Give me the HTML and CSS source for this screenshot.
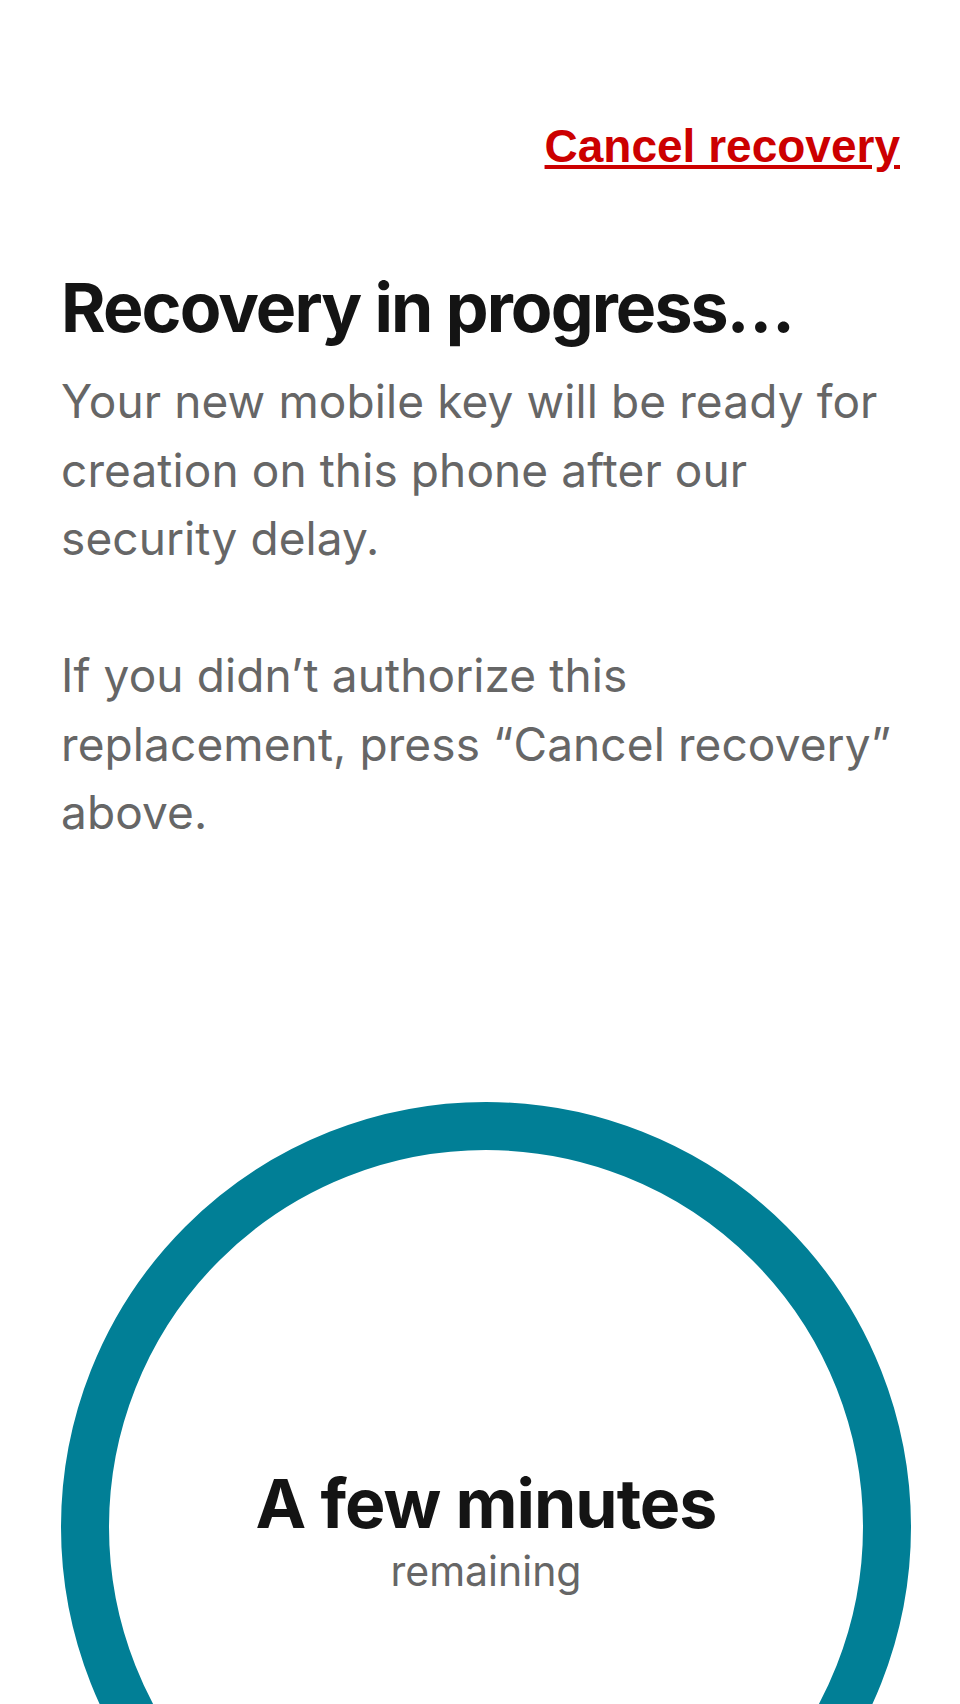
FILE: index.html
```html
<!DOCTYPE html>
<html lang="en">
<head>
<meta charset="utf-8">
<title>Recovery in progress</title>
<link rel="stylesheet" href="styles.css">
</head>
<body>
<main class="screen">
  <header class="topbar">
    <a class="cancel-link" href="#">Cancel recovery</a>
  </header>
  <h1 class="title">Recovery in progress…</h1>
  <p class="body-text">Your new mobile key will be ready for creation on this phone after our security delay.</p>
  <p class="body-text body-text--spaced">If you didn’t authorize this replacement, press “Cancel recovery” above.</p>
  <section class="timer">
    <div class="timer-ring">
      <div class="timer-value">A few minutes</div>
      <div class="timer-label">remaining</div>
    </div>
  </section>
</main>
</body>
</html>
```

FILE: styles.css
```css
html, body {
  margin: 0;
  padding: 0;
  background: #ffffff;
}

body {
  width: 960px;
  height: 1704px;
  overflow: hidden;
  font-family: Inter, "Noto Sans", sans-serif;
}

.screen {
  padding: 120px 60px 0 61px;
  display: flex;
  flex-direction: column;
}

.topbar {
  display: flex;
  justify-content: flex-end;
}

.cancel-link {
  font-family: "Liberation Sans", Arial, sans-serif;
  font-weight: 700;
  font-size: 46px;
  line-height: 53px;
  color: #cc0000;
  text-decoration: underline;
}

.title {
  margin: 93px 0 0;
  font-size: 68px;
  line-height: 82px;
  font-weight: 700;
  color: #141414;
  letter-spacing: -1.9px;
}

.body-text {
  margin: 19px 0 0;
  font-size: 46px;
  line-height: 68.5px;
  color: #666666;
  font-weight: 400;
  letter-spacing: 0.1px;
}

.body-text--spaced {
  margin-top: 68.5px;
}

.timer {
  margin-top: 255px;
}

.timer-ring {
  width: 850px;
  height: 850px;
  box-sizing: border-box;
  border: 48px solid #017f96;
  border-radius: 50%;
  display: flex;
  flex-direction: column;
  align-items: center;
  justify-content: center;
}

.timer-value {
  margin-top: 4px;
  font-size: 68px;
  line-height: 82px;
  font-weight: 700;
  color: #141414;
  letter-spacing: -1px;
}

.timer-label {
  margin-top: 2px;
  font-size: 41px;
  line-height: 50px;
  color: #666666;
}
```
